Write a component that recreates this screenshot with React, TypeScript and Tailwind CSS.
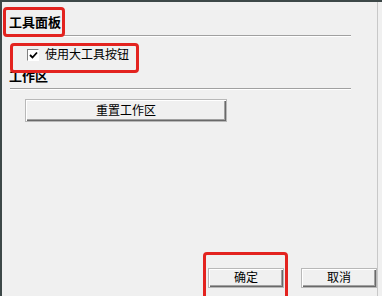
const CJK = "font-['Liberation_Sans','Noto_Sans_CJK_SC',sans-serif]";

// Classic Win32 push button bevel
const BEVEL =
  'bg-[#f0f0f0] shadow-[inset_1px_1px_#ffffff,inset_-1px_-1px_#696969,inset_-2px_-2px_#a0a0a0] border border-[#b8b8b8]';

function Rule() {
  return (
    <div className="ml-[8px] w-[341px]">
      <div className="h-px bg-[#a0a0a0]" />
      <div className="h-px bg-white" />
    </div>
  );
}

function Mark({ className }: { className: string }) {
  return (
    <div
      aria-hidden
      className={`pointer-events-none absolute rounded-[4px] border-[3px] border-[#e3231f] ${className}`}
    />
  );
}

export default function App() {
  return (
    <div
      className={`relative flex h-[296px] w-[382px] flex-col overflow-hidden border-l-2 border-t-2 border-[#3d4848] bg-[#f0f0f0] text-black ${CJK}`}
    >
      <div className="absolute right-[4px] top-0 h-full w-px bg-[#c8c8c8]" />

      {/* 工具面板 */}
      <div className="pl-[7px] pt-[12px] text-[13px] font-bold leading-[18px]">工具面板</div>
      <div className="mt-[3px]">
        <Rule />
      </div>

      <label className="ml-[25px] mt-[10px] flex items-center gap-[6px] text-[12px] leading-[16px]">
        <span className="flex h-[12px] w-[12px] items-center justify-center border border-l-[#808080] border-t-[#808080] border-r-white border-b-white bg-white">
          <svg width="9" height="8" viewBox="0 0 9 8">
            <path d="M1 4 L3.5 6.5 L8 1.5" fill="none" stroke="#000" strokeWidth="1.8" />
          </svg>
        </span>
        使用大工具按钮
      </label>

      {/* 工作区 */}
      <div className="pl-[7px] pt-[5px] text-[13px] font-bold leading-[18px]">工作区</div>
      <div className="mt-[2px]">
        <Rule />
      </div>

      <button
        className={`ml-[23px] mt-[9px] flex h-[23px] w-[202px] items-center justify-center text-[12px] ${BEVEL}`}
      >
        重置工作区
      </button>

      <div className="mt-auto mb-[8px] flex gap-[17px] pl-[206px]">
        <button className={`flex h-[20px] w-[76px] items-center justify-center text-[12px] ${BEVEL}`}>
          确定
        </button>
        <button className={`flex h-[20px] w-[76px] items-center justify-center text-[12px] ${BEVEL}`}>
          取消
        </button>
      </div>

      <Mark className="left-[1px] top-[5px] h-[30px] w-[62px]" />
      <Mark className="left-[8px] top-[41px] h-[30px] w-[129px]" />
      <Mark className="left-[201px] top-[250px] h-[50px] w-[85px]" />
    </div>
  );
}
